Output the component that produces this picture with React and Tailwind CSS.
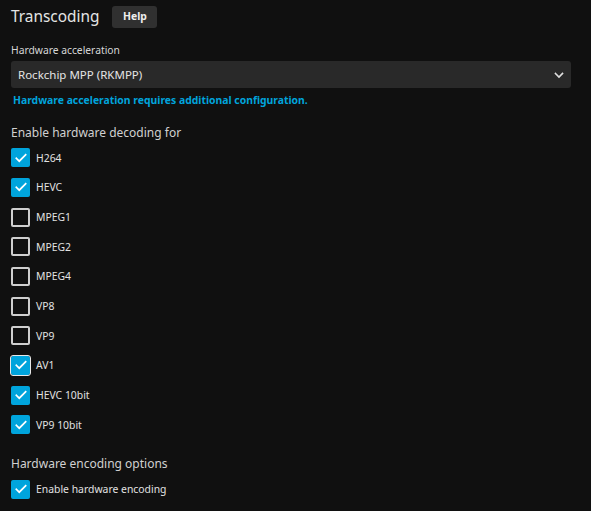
import React from "react";

const rows = [
  ["H264", true],
  ["HEVC", true],
  ["MPEG1", false],
  ["MPEG2", false],
  ["MPEG4", false],
  ["VP8", false],
  ["VP9", false],
  ["AV1", true, true],
  ["HEVC 10bit", true],
  ["VP9 10bit", true],
];

function Box({ checked, focused }) {
  if (checked) {
    return (
      <span
        className={
          "flex h-[19px] w-[19px] items-center justify-center rounded-[2px] bg-[#00a4dc] " +
          (focused ? "outline outline-1 outline-[#e8e8e8]" : "")
        }
      >
        <svg width="14" height="14" viewBox="0 0 24 24" fill="none">
          <path d="M4 12.5l5 5L20 6.5" stroke="#ffffff" strokeWidth="2.9" strokeLinecap="square" />
        </svg>
      </span>
    );
  }
  return <span className="block h-[19px] w-[19px] rounded-[2px] border-2 border-[#cfcfcf]" />;
}

function Row({ label, checked, focused }) {
  return (
    <div className="flex h-[29.67px] items-center gap-[6px]">
      <Box checked={checked} focused={focused} />
      <span className="text-[10.4px] leading-[14px] text-[#e2e2e2]">{label}</span>
    </div>
  );
}

export default function App() {
  return (
    <div
      className="min-h-[511px] w-full bg-[#101010] pl-[11px] pr-[20px]"
      style={{ fontFamily: '"Noto Sans", sans-serif' }}
    >
      <div className="flex h-[34px] items-center">
        <span className="text-[15.4px] leading-[20px] text-[#e4e4e4]">Transcoding</span>
        <span className="ml-[13px] flex h-[22px] w-[45px] items-center justify-center rounded-[3px] bg-[#303030] text-[10.4px] font-bold text-[#eeeeee]">
          Help
        </span>
      </div>
      <div className="mt-[9px] text-[10.3px] leading-[14px] text-[#d6d6d6]">Hardware acceleration</div>
      <div className="mt-[4px] flex h-[27px] items-center justify-between rounded-[3px] bg-[#292929] pl-[7px] pr-[6px]">
        <span className="text-[11.5px] text-[#e4e4e4]">Rockchip MPP (RKMPP)</span>
        <svg width="12" height="12" viewBox="0 0 24 24" fill="none">
          <path d="M5 9l7 7 7-7" stroke="#e0e0e0" strokeWidth="3.2" strokeLinecap="square" />
        </svg>
      </div>
      <div className="mt-[5px] pl-[2px] text-[10.4px] font-bold leading-[14px] text-[#00a4dc]">
        Hardware acceleration requires additional configuration.
      </div>
      <div className="mt-[18px] text-[12px] leading-[16px] text-[#d0d0d0]">Enable hardware decoding for</div>
      <div className="mt-[2px] flex flex-col">
        {rows.map(([l, c, f]) => (
          <Row key={l} label={l} checked={c} focused={f} />
        ))}
      </div>
      <div className="mt-[16px] text-[12px] leading-[16px] text-[#d0d0d0]">Hardware encoding options</div>
      <div className="mt-[3px]">
        <Row label="Enable hardware encoding" checked />
      </div>
    </div>
  );
}
